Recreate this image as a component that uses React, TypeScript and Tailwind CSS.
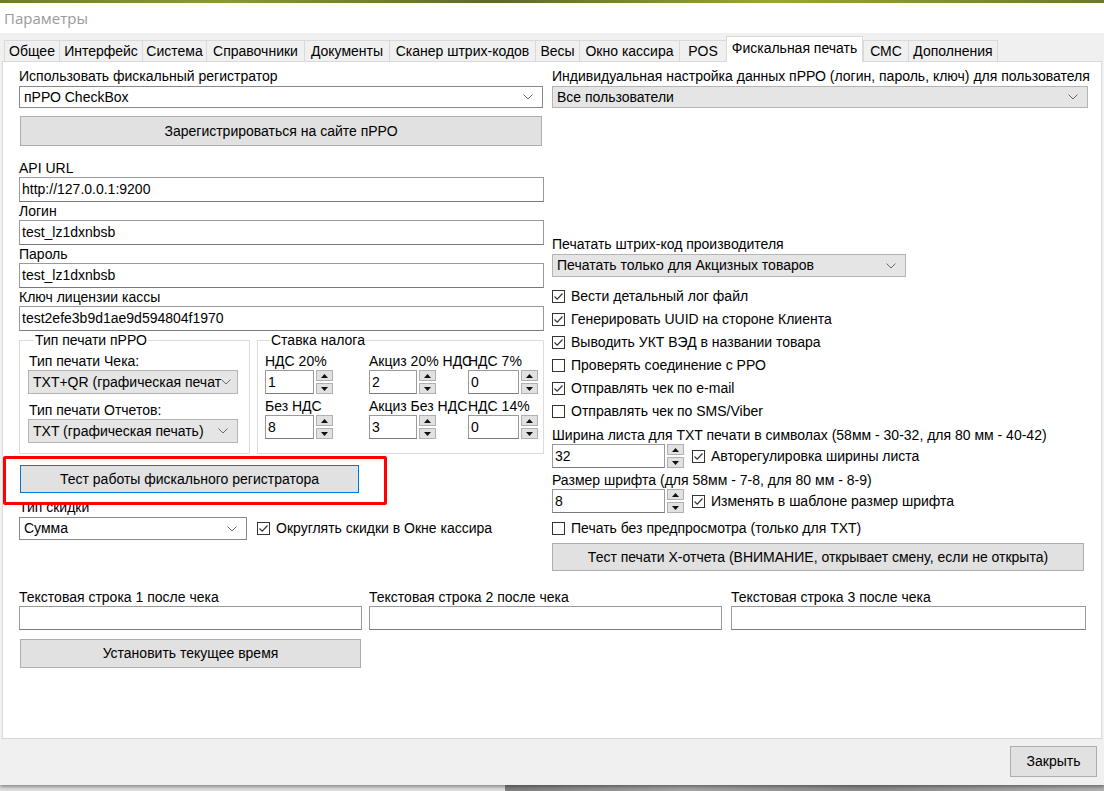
import React from "react";

const tabs: [string, string, boolean?][] = [
  ["Общее", "w-[55px]"],
  ["Интерфейс", "w-[83px]"],
  ["Система", "w-[64px]"],
  ["Справочники", "w-[98px]"],
  ["Документы", "w-[85px]"],
  ["Сканер штрих-кодов", "w-[146px]"],
  ["Весы", "w-[44px]"],
  ["Окно кассира", "w-[100px]"],
  ["POS", "w-[47px]"],
  ["Фискальная печать", "w-[137px]", true],
  ["СМС", "w-[45px]"],
  ["Дополнения", "w-[90px]"],
];

const Chevron = () => (
  <svg width="10" height="6" viewBox="0 0 10 6" className="shrink-0">
    <polyline points="0.5,0.5 5,5 9.5,0.5" fill="none" stroke="#6a6a6a" strokeWidth="1" />
  </svg>
);

const Combo = ({ value, white, className }: { value: string; white?: boolean; className: string }) => (
  <div
    className={`flex items-center border pl-[4px] pr-[9px] ${
      white ? "bg-white border-[#8a8a8a]" : "bg-[#e5e5e5] border-[#b4b4b4]"
    } ${className}`}
  >
    <span className="flex-1 whitespace-nowrap">{value}</span>
    <Chevron />
  </div>
);

const Btn = ({ children, className }: { children: React.ReactNode; className: string }) => (
  <div className={`flex items-center justify-center bg-[#e1e1e1] border border-[#adadad] ${className}`}>
    {children}
  </div>
);

const Field = ({ value, className }: { value?: string; className: string }) => (
  <div className={`bg-white border border-[#9a9a9a] border-b-[#7a7a7a] pl-[2px] flex items-center ${className}`}>
    {value}
  </div>
);

const Label = ({ children, className = "h-[18px]" }: { children: React.ReactNode; className?: string }) => (
  <div className={`flex items-center whitespace-nowrap ${className}`}>{children}</div>
);

const SpinBtn = ({ up }: { up?: boolean }) => (
  <div className="w-[17px] h-[11px] bg-[#e1e1e1] border border-[#b0b0b0] flex items-center justify-center">
    <svg width="7" height="4" viewBox="0 0 7 4">
      <polygon points={up ? "0,4 3.5,0 7,4" : "0,0 3.5,4 7,0"} fill="#111" />
    </svg>
  </div>
);

const Spin = ({ value, inputClass }: { value: string; inputClass: string }) => (
  <div className="flex items-center">
    <Field value={value} className={`h-[24px] ${inputClass}`} />
    <div className="ml-[2px] flex flex-col gap-[2px]">
      <SpinBtn up />
      <SpinBtn />
    </div>
  </div>
);

const Check = ({ checked }: { checked?: boolean }) => (
  <span className="w-[13px] h-[13px] border border-[#333] bg-white flex items-center justify-center shrink-0">
    {checked && (
      <svg width="11" height="11" viewBox="0 0 11 11">
        <polyline points="1.5,5.5 4.2,8.2 9.5,2.5" fill="none" stroke="#333" strokeWidth="1.2" />
      </svg>
    )}
  </span>
);

const CheckRow = ({ checked, text, className = "h-[23px]" }: { checked?: boolean; text: string; className?: string }) => (
  <div className={`flex items-center gap-[6px] whitespace-nowrap ${className}`}>
    <Check checked={checked} />
    <span>{text}</span>
  </div>
);

const TaxCell = ({ label, value, className, inputClass }: { label: string; value: string; className: string; inputClass: string }) => (
  <div className={className}>
    <Label>{label}</Label>
    <Spin value={value} inputClass={inputClass} />
  </div>
);

export default function App() {
  return (
    <div className="w-[1104px] h-[791px] flex flex-col overflow-hidden bg-[#f0f0f0] text-[14px] text-black font-['Liberation_Sans',Arial,sans-serif]">
      <div className="h-[3px] shrink-0 bg-[linear-gradient(90deg,#6f7d2b,#8a9a35_20%,#5d6b22_45%,#9aa63a_70%,#6a7a28)]" />
      <div className="h-[30px] shrink-0 bg-white flex items-center pl-[4px] text-[15px] text-[#9a9a9a] font-['Open_Sans','Noto_Sans',sans-serif]">
        Параметры
      </div>

      {/* tabs */}
      <div className="h-[28px] shrink-0 flex items-end pl-[4px]">
        {tabs.map(([name, w, active]) =>
          active ? (
            <div
              key={name}
              className={`${w} h-[26px] -mb-[1px] relative z-10 bg-white border border-b-0 border-[#d9d9d9] flex items-center justify-center pb-[2px]`}
            >
              {name}
            </div>
          ) : (
            <div
              key={name}
              className={`${w} h-[21px] bg-[#f0f0f0] border border-r-0 border-b-0 border-[#d9d9d9] flex items-center justify-center last:border-r`}
            >
              {name}
            </div>
          )
        )}
      </div>

      {/* tab page */}
      <div className="relative mx-[2px] h-[678px] shrink-0 bg-white border border-[#d9d9d9] pt-[5px] pl-[16px]">
        <div className="flex gap-[8px]">
          {/* left column */}
          <div className="w-[525px] flex flex-col">
            <Label className="h-[19px]">Использовать фискальный регистратор</Label>
            <Combo white value="пРРО CheckBox" className="w-[524px] h-[22px]" />
            <Btn className="mt-[8px] ml-[1px] w-[522px] h-[30px]">Зарегистрироваться на сайте пРРО</Btn>

            <Label className="mt-[13px] h-[18px]">API URL</Label>
            <Field value="http://127.0.0.1:9200" className="w-[525px] h-[25px]" />
            <Label>Логин</Label>
            <Field value="test_lz1dxnbsb" className="w-[525px] h-[25px]" />
            <Label>Пароль</Label>
            <Field value="test_lz1dxnbsb" className="w-[525px] h-[25px]" />
            <Label>Ключ лицензии кассы</Label>
            <Field value="test2efe3b9d1ae9d594804f1970" className="w-[525px] h-[25px]" />

            <div className="mt-[1px] flex gap-[7px]">
              <fieldset className="w-[231px] h-[122px] border border-[#dcdcdc] pl-[8px]">
                <legend className="ml-[6px] px-[1px] leading-[17px]">Тип печати пРРО</legend>
                <Label className="mt-[3px] ml-[1px] h-[18px]">Тип печати Чека:</Label>
                <Combo value="TXT+QR (графическая печат" className="w-[210px] h-[24px] pr-[8px]" />
                <Label className="mt-[7px] ml-[1px] h-[18px]">Тип печати Отчетов:</Label>
                <Combo value="TXT (графическая печать)" className="w-[210px] h-[24px] pr-[8px]" />
              </fieldset>
              <fieldset className="w-[287px] h-[122px] border border-[#dcdcdc] pl-[7px]">
                <legend className="ml-[5px] px-[1px] leading-[17px]">Ставка налога</legend>
                <div className="mt-[3px] flex">
                  <TaxCell label="НДС 20%" value="1" className="w-[104px]" inputClass="w-[49px]" />
                  <TaxCell label="Акциз 20% НДС" value="2" className="w-[99px]" inputClass="w-[48px]" />
                  <TaxCell label="НДС 7%" value="0" className="w-[70px]" inputClass="w-[51px]" />
                </div>
                <div className="mt-[3px] flex">
                  <TaxCell label="Без НДС" value="8" className="w-[104px]" inputClass="w-[49px]" />
                  <TaxCell label="Акциз Без НДС" value="3" className="w-[99px]" inputClass="w-[48px]" />
                  <TaxCell label="НДС 14%" value="0" className="w-[70px]" inputClass="w-[51px]" />
                </div>
              </fieldset>
            </div>

            <Btn className="mt-[11px] ml-[1px] w-[339px] h-[28px] !border-[#0078d7]">Тест работы фискального регистратора</Btn>
            <Label className="mt-[5px] h-[18px]">Тип скидки</Label>
            <div className="mt-[1px] flex items-center">
              <Combo white value="Сумма" className="w-[228px] h-[23px]" />
              <CheckRow checked text="Округлять скидки в Окне кассира" className="ml-[10px] h-[23px]" />
            </div>
          </div>

          {/* right column */}
          <div className="w-[536px] flex flex-col">
            <Label className="h-[19px]">Индивидуальная настройка данных пРРО (логин, пароль, ключ) для пользователя</Label>
            <Combo value="Все пользователи" className="w-[536px] h-[22px]" />

            <Label className="mt-[127px] h-[19px]">Печатать штрих-код производителя</Label>
            <Combo value="Печатать только для Акцизных товаров" className="w-[354px] h-[23px]" />

            <div className="mt-[8px] flex flex-col">
              <CheckRow checked text="Вести детальный лог файл" />
              <CheckRow checked text="Генерировать UUID на стороне Клиента" />
              <CheckRow checked text="Выводить УКТ ВЭД в названии товара" />
              <CheckRow text="Проверять соединение с РРО" />
              <CheckRow checked text="Отправлять чек по e-mail" />
              <CheckRow text="Отправлять чек по SMS/Viber" />
            </div>

            <Label className="mt-[3px] h-[18px]">Ширина листа для TXT печати в символах (58мм - 30-32, для 80 мм - 40-42)</Label>
            <div className="flex items-center">
              <Spin value="32" inputClass="w-[113px]" />
              <CheckRow checked text="Авторегулировка ширины листа" className="ml-[8px] h-[24px]" />
            </div>
            <Label className="mt-[3px] h-[18px]">Размер шрифта (для 58мм - 7-8, для 80 мм - 8-9)</Label>
            <div className="flex items-center">
              <Spin value="8" inputClass="w-[113px]" />
              <CheckRow checked text="Изменять в шаблоне размер шрифта" className="ml-[8px] h-[24px]" />
            </div>
            <CheckRow text="Печать без предпросмотра (только для TXT)" className="mt-[4px] h-[23px]" />
            <Btn className="mt-[3px] w-[532px] h-[28px]">Тест печати X-отчета (ВНИМАНИЕ, открывает смену, если не открыта)</Btn>
          </div>
        </div>

        {/* text lines after receipt */}
        <div className="mt-[17px] flex">
          <div className="w-[343px]">
            <Label>Текстовая строка 1 после чека</Label>
            <Field className="h-[24px] w-full" />
          </div>
          <div className="ml-[7px] w-[353px]">
            <Label>Текстовая строка 2 после чека</Label>
            <Field className="h-[24px] w-full" />
          </div>
          <div className="ml-[9px] w-[355px]">
            <Label>Текстовая строка 3 после чека</Label>
            <Field className="h-[24px] w-full" />
          </div>
        </div>
        <Btn className="mt-[9px] ml-[1px] w-[341px] h-[29px]">Установить текущее время</Btn>

        {/* red annotation frame */}
        <div className="absolute left-[0px] top-[394px] w-[384px] h-[49px] border-[3px] border-[#ff0000] rounded-[2px]" />
      </div>

      {/* footer */}
      <div className="h-[46px] shrink-0 flex justify-end items-start pt-[7px] pr-[7px] shadow-[0_2px_3px_rgba(0,0,0,0.35)] relative z-10">
        <Btn className="w-[87px] h-[31px]">Закрыть</Btn>
      </div>
      <div className="h-[6px] shrink-0 flex">
        <div className="w-[505px] bg-[#dcdcdc]" />
        <div className="flex-1 bg-[linear-gradient(90deg,#7d7d7d,#a4a4a4_30%,#8a8a8a_60%,#b0b0b0)]" />
      </div>
    </div>
  );
}
